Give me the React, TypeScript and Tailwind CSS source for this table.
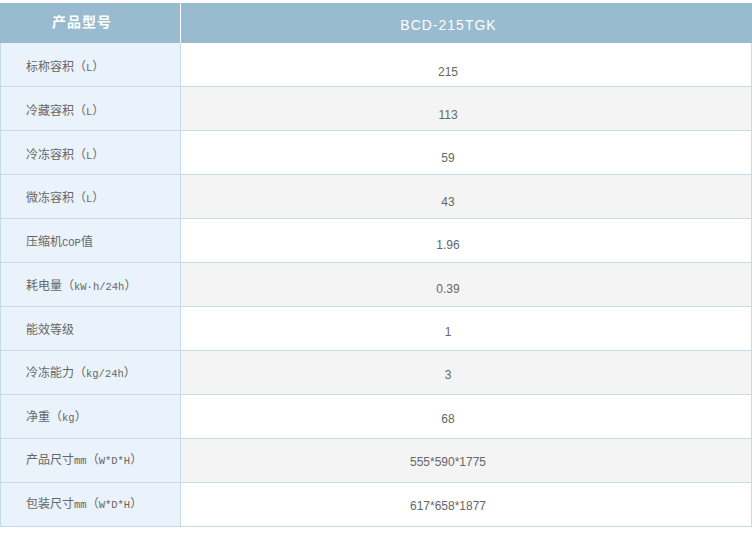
import React from "react";

const rows: [string, string][] = [
  ["标称容积（L）", "215"],
  ["冷藏容积（L）", "113"],
  ["冷冻容积（L）", "59"],
  ["微冻容积（L）", "43"],
  ["压缩机COP值", "1.96"],
  ["耗电量（kW·h/24h）", "0.39"],
  ["能效等级", "1"],
  ["冷冻能力（kg/24h）", "3"],
  ["净重（kg）", "68"],
  ["产品尺寸mm（W*D*H）", "555*590*1775"],
  ["包装尺寸mm（W*D*H）", "617*658*1877"],
];

function Label({ text }: { text: string }) {
  const parts = text.split(/([A-Za-z0-9*·/]+)/);
  return (
    <span>
      {parts.map((p, i) =>
        /^[A-Za-z0-9*·/]+$/.test(p) ? (
          <span key={i} className="text-[10.5px] [font-family:'Liberation_Mono',monospace]">
            {p}
          </span>
        ) : (
          <span key={i}>{p}</span>
        )
      )}
    </span>
  );
}

export default function App() {
  return (
    <div className="w-[752px] h-[549px] bg-white pt-[3px]">
      <div className="flex h-[40px] bg-[#98bbd0] text-white">
        <div className="w-[180px] flex items-center justify-center pr-[16px] pb-[3px] text-[14px] font-bold tracking-[1px] [font-family:'Noto_Sans_CJK_SC',sans-serif]">
          产品型号
        </div>
        <div className="w-[1px] bg-white" />
        <div className="flex-1 flex items-center justify-center pr-[36px] pt-[5px] text-[14px] tracking-[1px] [font-family:'Liberation_Sans',Arial,sans-serif]">
          BCD-215TGK
        </div>
      </div>
      {rows.map(([label, value], i) => {
        const lOff = 5 - 0.6 * i;
        const vOff = 14 - 1.2 * i;
        return (
          <div key={i} className="flex h-[44px] border-b border-[#c5dbe8]">
            <div
              className="w-[181px] bg-[#eaf3fb] border-l border-r border-[#c5dbe8] flex items-center pl-[25px] text-[12px] text-[#666666] [font-family:'Noto_Sans_CJK_SC',sans-serif]"
              style={{ paddingTop: Math.max(0, lOff), paddingBottom: Math.max(0, -lOff) }}
            >
              <Label text={label} />
            </div>
            <div
              className={
                "flex-1 border-r border-[#c5dbe8] flex items-center justify-center pr-[36px] text-[12px] text-[#666666] [font-family:'Liberation_Sans',Arial,sans-serif] " +
                (i % 2 === 1 ? "bg-[#f4f4f4]" : "bg-white")
              }
              style={{ paddingTop: Math.max(0, vOff), paddingBottom: Math.max(0, -vOff) }}
            >
              {value}
            </div>
          </div>
        );
      })}
    </div>
  );
}
